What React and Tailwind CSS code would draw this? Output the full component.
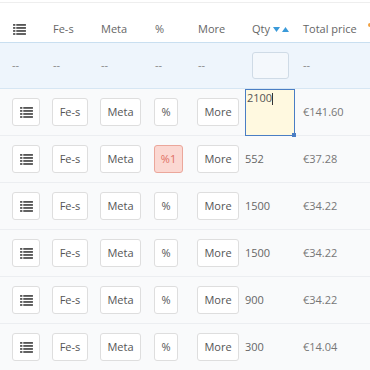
import React from 'react';

const rows = [
  { qty: '2100', price: '€141.60', editing: true },
  { qty: '552', price: '€37.28', pct: '%1' },
  { qty: '1500', price: '€34.22' },
  { qty: '1500', price: '€34.22' },
  { qty: '900', price: '€34.22' },
  { qty: '300', price: '€14.04' },
];

const ListIcon = ({ className = '' }) => (
  <svg viewBox="0 0 14 12" className={className} fill="currentColor">
    <rect x="0" y="0" width="2.5" height="2" />
    <rect x="3.5" y="0" width="10.5" height="2" />
    <rect x="0" y="3.3" width="2.5" height="2" />
    <rect x="3.5" y="3.3" width="10.5" height="2" />
    <rect x="0" y="6.6" width="2.5" height="2" />
    <rect x="3.5" y="6.6" width="10.5" height="2" />
    <rect x="0" y="9.9" width="2.5" height="2" />
    <rect x="3.5" y="9.9" width="10.5" height="2" />
  </svg>
);

const Btn = ({ children, className = '' }) => (
  <div
    className={`h-[28px] flex items-center justify-center rounded-[3px] border border-[#dedede] bg-white text-[11px] text-[#555] ${className}`}
  >
    {children}
  </div>
);

export default function App() {
  return (
    <div
      className="w-[370px] h-[370px] overflow-hidden bg-white text-[#666]"
      style={{ fontFamily: '"Open Sans", "Liberation Sans", sans-serif' }}
    >
      <div className="h-[3px] border-b border-[#eeeeee]" />
      {/* header */}
      <div className="flex items-center h-[40px] pt-[14px] text-[11px] text-[#666] border-b border-[#c9dff0]">
        <div className="w-[52px] pl-[13px]">
          <ListIcon className="w-[13px] h-[11px] text-[#555]" />
        </div>
        <div className="w-[48px] pl-px">Fe-s</div>
        <div className="w-[54px] pl-px">Meta</div>
        <div className="w-[43px] pl-px">%</div>
        <div className="w-[48px] pl-px">More</div>
        <div className="w-[58px] pl-[7px] flex items-center gap-[3px]">
          <span>Qty</span>
          <svg viewBox="0 0 16 6" className="w-[16px] h-[6px] text-[#3a9ad9]" fill="currentColor">
            <polygon points="0,0 7,0 3.5,5" />
            <polygon points="9,5 16,5 12.5,0" />
          </svg>
        </div>
        <div className="flex-1 flex items-center justify-between">
          <span>Total price</span>
          <span className="w-[4px] h-[4px] rounded-full bg-[#f0a040] mr-[-2px] mt-[-10px]" />
        </div>
      </div>
      {/* filter row */}
      <div className="flex items-center h-[46px] bg-[#eef5fc] border-b border-[#d6e6f3] text-[11px] text-[#888]">
        <div className="w-[52px] pl-[12px]">--</div>
        <div className="w-[48px] pl-px">--</div>
        <div className="w-[54px] pl-px">--</div>
        <div className="w-[43px] pl-px">--</div>
        <div className="w-[48px] pl-px">--</div>
        <div className="w-[58px] pl-[7px]">
          <div className="w-[37px] h-[27px] rounded-[3px] border border-[#cfdbe6] bg-[#f4f8fc]" />
        </div>
        <div className="flex-1">--</div>
      </div>
      {/* data rows */}
      {rows.map((r, i) => (
        <div
          key={i}
          className="flex items-center h-[47px] bg-[#f9fafb] border-b border-[#eceef1] text-[11px]"
        >
          <div className="w-[52px] pl-[12px]">
            <Btn className="w-[28px]">
              <ListIcon className="w-[13px] h-[11px] text-[#555]" />
            </Btn>
          </div>
          <div className="w-[48px]">
            <Btn className="w-[36px]">Fe-s</Btn>
          </div>
          <div className="w-[54px]">
            <Btn className="w-[41px]">Meta</Btn>
          </div>
          <div className="w-[43px]">
            {r.pct ? (
              <Btn className="w-[29px] !bg-[#fbd8d2] !border-[#eba79b] !text-[#e06f63]">{r.pct}</Btn>
            ) : (
              <Btn className="w-[24px]">%</Btn>
            )}
          </div>
          <div className="w-[48px]">
            <Btn className="w-[42px]">More</Btn>
          </div>
          <div className="w-[58px] self-stretch flex items-center">
            {r.editing ? (
              <div className="relative w-[50px] h-[47px] bg-[#fff9e0] border border-[#4a7ec4] pl-[1px] pt-[1px] text-[#555] leading-[14px]">
                2100<span className="inline-block w-px h-[12px] bg-[#333] align-middle" />
                <span className="absolute right-[-2px] bottom-[-2px] w-[4px] h-[4px] bg-[#4a7ec4]" />
              </div>
            ) : (
              <span className="text-[#666]">{r.qty}</span>
            )}
          </div>
          <div className="flex-1 text-[#777]">{r.price}</div>
        </div>
      ))}
    </div>
  );
}
